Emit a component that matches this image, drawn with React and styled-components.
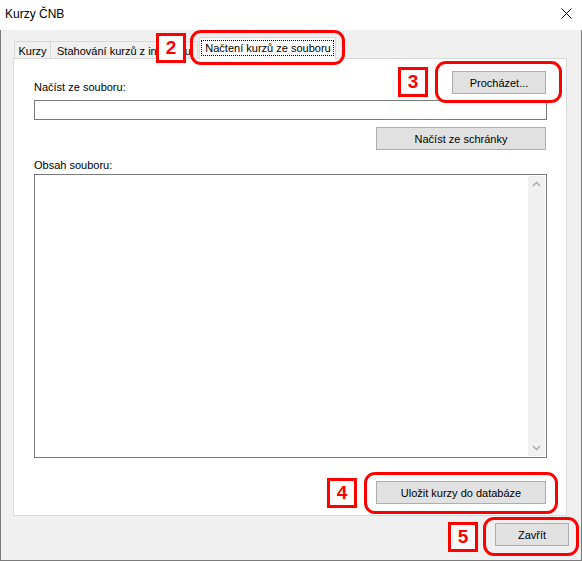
import React from 'react';
import styled, { createGlobalStyle } from 'styled-components';

const GlobalStyle = createGlobalStyle`
  html, body {
    margin: 0;
    padding: 0;
    background: #fff;
  }

  body {
    font-family: "Liberation Sans", Arial, sans-serif;
    font-size: 11px;
    color: #000;
  }
`;

const Window = styled.div`
  position: relative;
  width: 582px;
  height: 561px;
  display: flex;
  flex-direction: column;
  overflow: hidden;
`;

const TitleBar = styled.div`
  flex: none;
  height: 30px;
  box-sizing: border-box;
  padding: 0 10px 3px 5px;
  display: flex;
  align-items: center;
  justify-content: space-between;
  background: #fff;
  font-size: 12px;
`;

const Body = styled.div`
  flex: 1;
  box-sizing: border-box;
  background: #f0f0f0;
  border: 1px solid #7a7a7a;
  border-top: none;
  padding: 7px 14px 0 12px;
  display: flex;
  flex-direction: column;
`;

const TabStrip = styled.div`
  height: 21px;
  display: flex;
  align-items: flex-end;
  padding-left: 1px;
`;

const Tab = styled.div`
  box-sizing: border-box;
  width: ${p => p.$width}px;
  height: ${p => (p.$active ? 22 : 17)}px;
  margin-left: ${p => p.$offset || 0}px;
  margin-bottom: ${p => (p.$active ? -1 : 0)}px;
  position: relative;
  z-index: ${p => (p.$active ? 1 : 0)};
  background: ${p => (p.$active ? '#fff' : '#f0f0f0')};
  border: 1px solid #d9d9d9;
  border-bottom: none;
  display: flex;
  align-items: center;
  justify-content: center;
  white-space: nowrap;
  padding-top: ${p => (p.$active ? 0 : 1)}px;
`;

const FocusRect = styled.span`
  border: 1px dotted #000;
  padding: 1px 2px 1px 3px;
  line-height: 12px;
  margin-bottom: 2px;
`;

const Panel = styled.div`
  flex: none;
  background: #fff;
  border: 1px solid #d9d9d9;
  padding: 12px 19px 11px 20px;
  display: flex;
  flex-direction: column;
`;

const LabelRow = styled.div`
  display: flex;
  align-items: flex-end;
  justify-content: space-between;
`;

const Label = styled.div`
  line-height: 13px;
  margin-top: ${p => p.$gap || 0}px;
`;

const ButtonRow = styled.div`
  display: flex;
  justify-content: flex-end;
  padding-right: ${p => p.$right || 0}px;
  margin-top: ${p => p.$gap || 0}px;
`;

const Button = styled.div`
  box-sizing: border-box;
  width: ${p => p.$width}px;
  height: 23px;
  background: #e1e1e1;
  border: 1px solid #adadad;
  display: flex;
  align-items: center;
  justify-content: center;
  white-space: nowrap;
`;

const TextField = styled.div`
  box-sizing: border-box;
  height: 20px;
  margin-top: 6px;
  border: 1px solid #7a7a7a;
  background: #fff;
`;

const TextArea = styled.div`
  box-sizing: border-box;
  height: 284px;
  margin-top: 2px;
  padding: 1px;
  border: 1px solid #7a7a7a;
  background: #fff;
  display: flex;
  justify-content: flex-end;
`;

const ScrollBar = styled.div`
  width: 17px;
  background: #f0f0f0;
  display: flex;
  flex-direction: column;
  justify-content: space-between;
`;

const Footer = styled.div`
  display: flex;
  justify-content: flex-end;
  margin: 7px -2px 0 0;
`;

const Callout = styled.div`
  position: absolute;
  box-sizing: border-box;
  left: ${p => p.$x}px;
  top: ${p => p.$y}px;
  width: ${p => p.$w}px;
  height: ${p => p.$h}px;
  border: 3px solid #ff0000;
  border-radius: 11px;
  pointer-events: none;
`;

const Badge = styled.div`
  position: absolute;
  box-sizing: border-box;
  left: ${p => p.$x}px;
  top: ${p => p.$y}px;
  width: 30px;
  height: 30px;
  border: 3px solid #ff0000;
  background: #fff;
  color: #ff0000;
  font-size: 19px;
  font-weight: bold;
  display: flex;
  align-items: center;
  justify-content: center;
`;

const CloseIcon = () => (
  <svg width="11" height="11" viewBox="0 0 11 11">
    <path d="M0.5 0.5 L10.5 10.5 M10.5 0.5 L0.5 10.5" stroke="#000" strokeWidth="1" />
  </svg>
);

const Arrow = ({ down }) => (
  <svg width="17" height="17" viewBox="0 0 17 17">
    <polyline
      points={down ? '5,7 8.5,10.5 12,7' : '5,10 8.5,6.5 12,10'}
      fill="none"
      stroke="#a6a6a6"
      strokeWidth="1.4"
    />
  </svg>
);

const App = () => (
  <Window>
    <GlobalStyle />
    <TitleBar>
      <span>Kurzy ČNB</span>
      <CloseIcon />
    </TitleBar>
    <Body>
      <TabStrip>
        <Tab $width={37}>Kurzy</Tab>
        <Tab $width={148} $offset={-1}>Stahování kurzů z internetu</Tab>
        <Tab $width={137} $offset={1} $active>
          <FocusRect>Načtení kurzů ze souboru</FocusRect>
        </Tab>
      </TabStrip>
      <Panel>
        <LabelRow>
          <Label>Načíst ze souboru:</Label>
          <ButtonRow $right={1}>
            <Button $width={94}>Procházet...</Button>
          </ButtonRow>
        </LabelRow>
        <TextField />
        <ButtonRow $right={1} $gap={7}>
          <Button $width={170}>Načíst ze schránky</Button>
        </ButtonRow>
        <Label $gap={9}>Obsah souboru:</Label>
        <TextArea>
          <ScrollBar>
            <Arrow />
            <Arrow down />
          </ScrollBar>
        </TextArea>
        <ButtonRow $right={1} $gap={23}>
          <Button $width={170}>Uložit kurzy do databáze</Button>
        </ButtonRow>
      </Panel>
      <Footer>
        <Button $width={74}>Zavřít</Button>
      </Footer>
    </Body>

    <Callout $x={190} $y={30} $w={155} $h={35} />
    <Badge $x={156} $y={33}>2</Badge>
    <Callout $x={435} $y={61} $w={127} $h={42} />
    <Badge $x={398} $y={67}>3</Badge>
    <Callout $x={364} $y={472} $w={194} $h={42} />
    <Badge $x={327} $y={478}>4</Badge>
    <Callout $x={483} $y={517} $w={96} $h={39} />
    <Badge $x={448} $y={522}>5</Badge>
  </Window>
);

export default App;
